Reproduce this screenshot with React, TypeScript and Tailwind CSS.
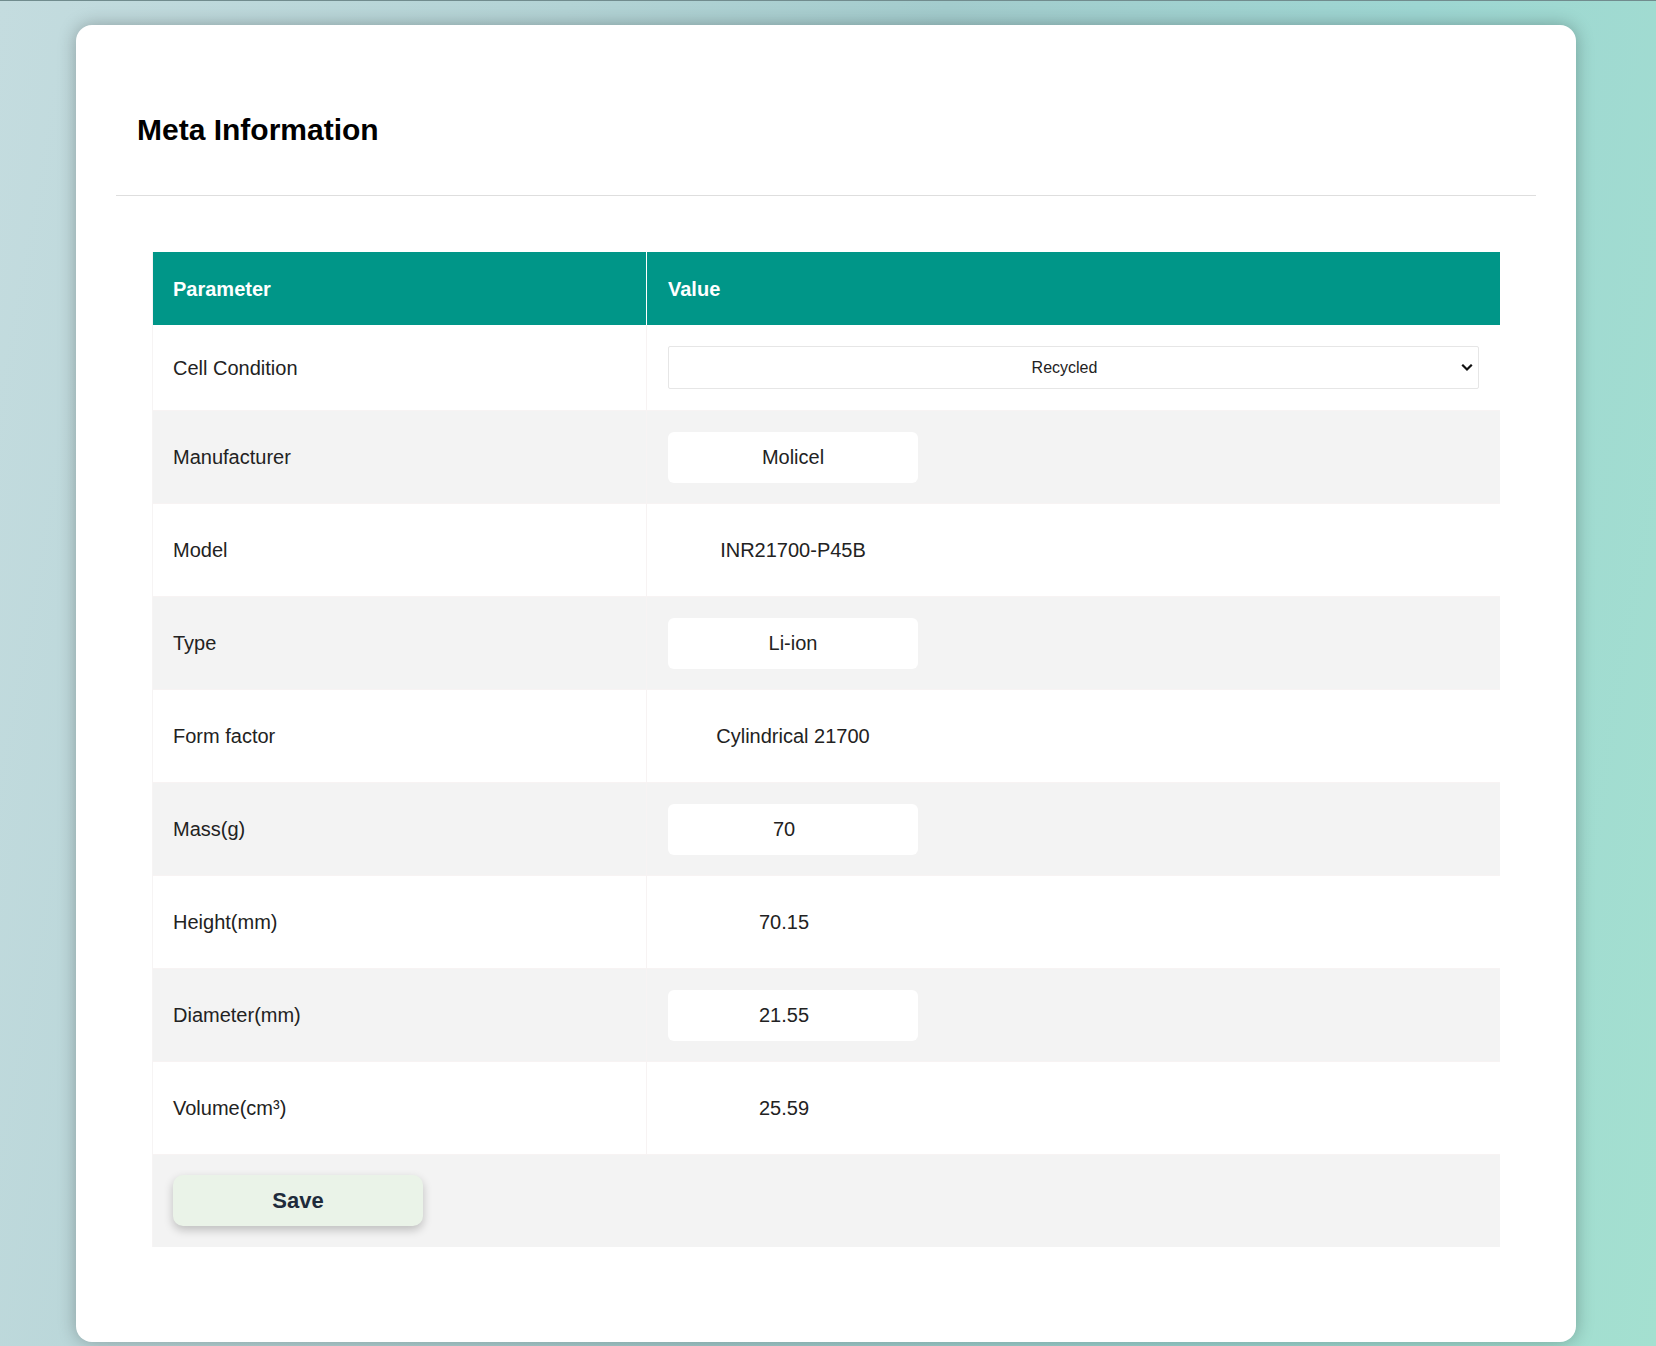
import { type ReactNode } from "react";

type Row = {
  label: ReactNode;
  value: string;
  kind: "select" | "input" | "number" | "text" | "numtext";
};

const ROWS: Row[] = [
  { label: "Cell Condition", value: "Recycled", kind: "select" },
  { label: "Manufacturer", value: "Molicel", kind: "input" },
  { label: "Model", value: "INR21700-P45B", kind: "text" },
  { label: "Type", value: "Li-ion", kind: "input" },
  { label: "Form factor", value: "Cylindrical 21700", kind: "text" },
  { label: "Mass(g)", value: "70", kind: "number" },
  { label: "Height(mm)", value: "70.15", kind: "numtext" },
  { label: "Diameter(mm)", value: "21.55", kind: "number" },
  { label: "Volume(cm³)", value: "25.59", kind: "numtext" },
];

function ValueCell({ row }: { row: Row }) {
  if (row.kind === "select") {
    return (
      <div className="flex h-[43px] w-full items-center rounded-[2px] border border-[#e6e6e6] bg-white text-[16px] text-[#222]">
        <span className="flex-1 text-center">{row.value}</span>
        <svg className="mr-[4px] h-[8px] w-[14px]" viewBox="0 0 14 8" fill="none">
          <path d="M3 1.5 L7 5.5 L11 1.5" stroke="#111" strokeWidth="2.2" strokeLinecap="square" />
        </svg>
      </div>
    );
  }

  const numeric = row.kind === "number" || row.kind === "numtext";
  const boxed = row.kind === "input" || row.kind === "number";

  return (
    <div
      className={`flex h-[51px] w-[250px] items-center justify-center rounded-[6px] text-[20px] text-[#222] ${
        boxed ? "bg-white" : ""
      } ${numeric ? "pr-[18px]" : ""}`}
    >
      {row.value}
    </div>
  );
}

export default function App() {
  return (
    <div className="min-h-screen border-t border-[#718c8e] bg-[linear-gradient(100deg,#c4dcdf_0%,#b3d3d5_30%,#a3cccd_50%,#9dd6d2_75%,#a4e0d0_100%)] pt-[24px] font-['Liberation_Sans',Arial,sans-serif]">
      <div className="ml-[76px] w-[1500px] rounded-2xl bg-white px-[40px] pb-[95px] shadow-[0_0_18px_rgba(0,0,0,0.28)]">
        {/* Title */}
        <div className="border-b border-[#dedede] px-[21px] pb-[47px] pt-[87px]">
          <h1 className="text-[30px] font-bold leading-[36px] text-black">Meta Information</h1>
        </div>

        {/* Table */}
        <div className="px-[36px] pt-[56px]">
          <div className="grid grid-cols-[494px_853px] border-l border-[#f6f4f4]">
            <div className="flex h-[73px] items-center border-r border-white bg-[#009688] px-[20px] text-[20px] font-bold text-white">
              Parameter
            </div>
            <div className="flex h-[73px] items-center bg-[#009688] px-[21px] text-[20px] font-bold text-white">
              Value
            </div>

            {ROWS.map((row, i) => {
              const bg = i % 2 === 1 ? "bg-[#f3f3f3]" : "bg-white";
              const h = i === 0 ? "h-[86px]" : "h-[93px]";
              return (
                <div key={i} className="contents">
                  <div
                    className={`flex items-center border-b border-r border-[#f7f3f3] px-[20px] text-[20px] text-[#222] ${bg} ${h}`}
                  >
                    {row.label}
                  </div>
                  <div className={`flex items-center border-b border-[#f7f3f3] px-[21px] ${bg} ${h}`}>
                    <ValueCell row={row} />
                  </div>
                </div>
              );
            })}

            <div className="col-span-2 flex h-[92px] items-start bg-[#f3f3f3] px-[20px] pt-[20px]">
              <button className="h-[51px] w-[250px] rounded-[10px] bg-[#eaf3e8] text-[22px] font-bold text-[#1e2b3b] shadow-[0_4px_10px_rgba(0,0,0,0.22)]">
                Save
              </button>
            </div>
          </div>
        </div>
      </div>
    </div>
  );
}
